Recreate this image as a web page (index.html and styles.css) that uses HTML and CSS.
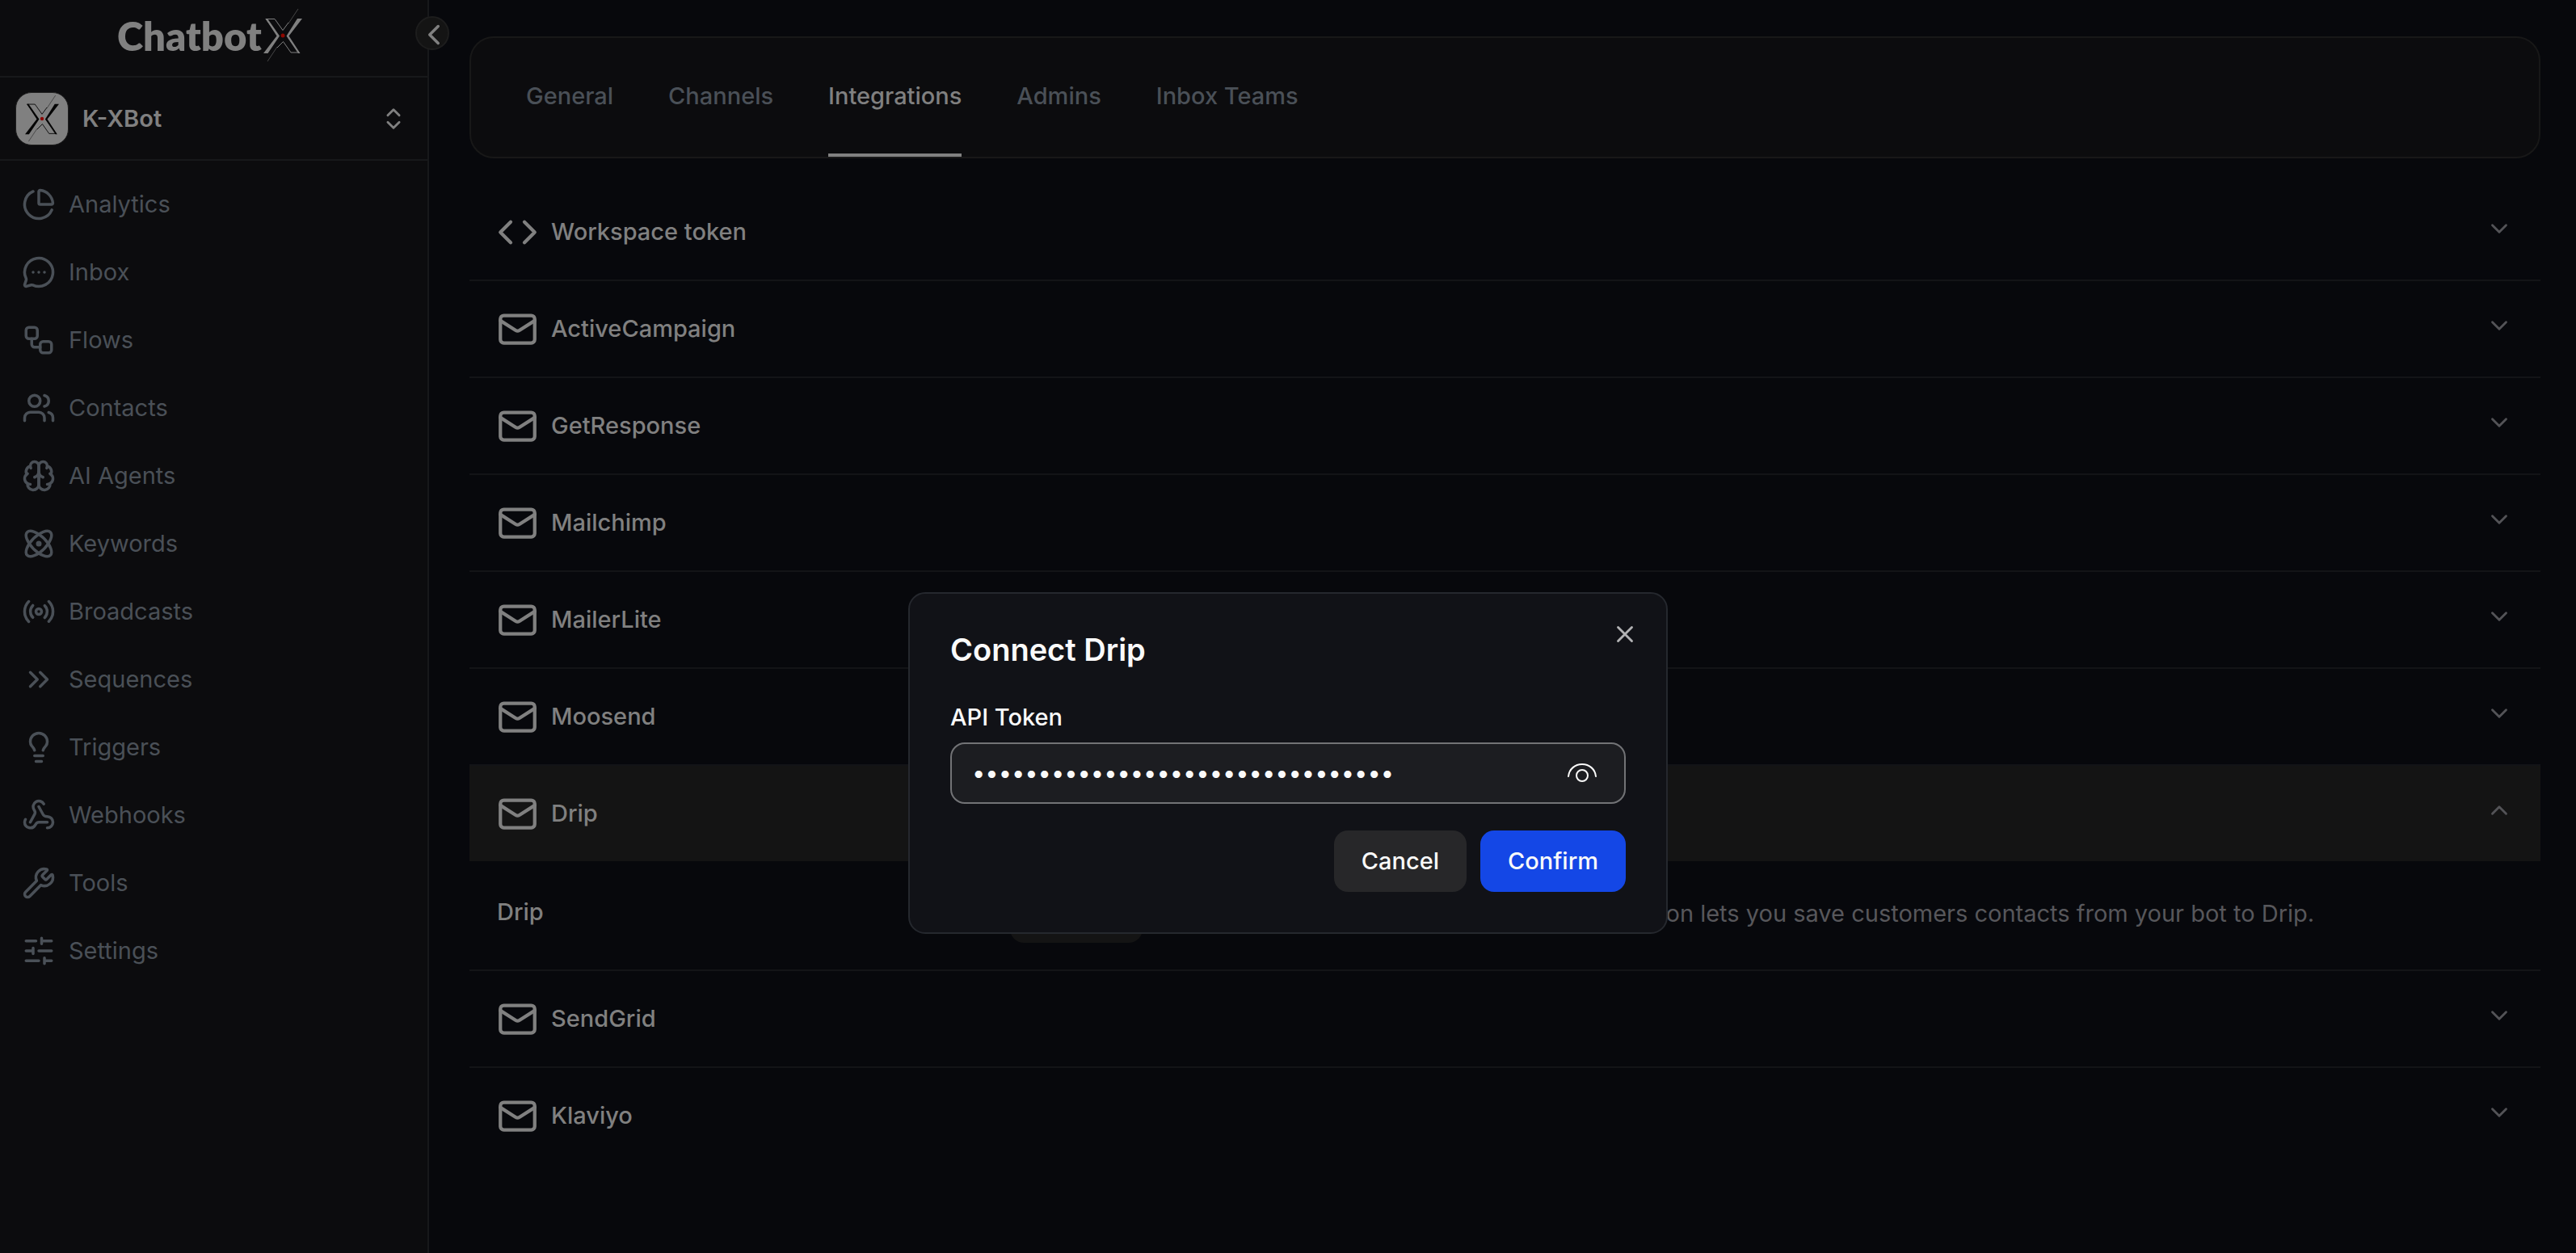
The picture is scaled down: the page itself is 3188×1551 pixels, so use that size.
FILE: index.html
```html
<!DOCTYPE html>
<html lang="en">
<head>
<meta charset="utf-8">
<title>ChatbotX – Integrations</title>
<link rel="stylesheet" href="styles.css">
</head>
<body>
<svg class="sprite" aria-hidden="true">
  <symbol id="i-mail" viewBox="0 0 24 24"><rect width="20" height="16" x="2" y="4" rx="2"/><path d="m22 7-8.97 5.7a1.94 1.94 0 0 1-2.06 0L2 7"/></symbol>
  <symbol id="i-code" viewBox="0 0 24 24"><path d="m16 18 6-6-6-6M8 6l-6 6 6 6"/></symbol>
  <symbol id="i-down" viewBox="0 0 24 24"><path d="m6 9 6 6 6-6"/></symbol>
  <symbol id="i-up" viewBox="0 0 24 24"><path d="m18 15-6-6-6 6"/></symbol>
  <symbol id="i-xmark" viewBox="0 0 48 66">
    <path class="x-hair" d="M43 0 31 18M17 47 5 65"/>
    <path class="x-thin" d="M3 12.500H14L24 26.500 31 17M3 12.500 18 33M17 48 24.500 40.500 34 54H44L29.500 34"/>
    <path class="x-fill" d="M42 12h6L31.500 33.500 45.500 55H43L28.500 33.500ZM0 55h5.500L20 33.500 5 12H2.500L16.500 33.500Z"/>
    <circle class="x-dot" cx="24" cy="33" r="2.500"/>
  </symbol>
</svg>

<div class="app">
  <aside class="sidebar">
    <div class="brand">
      <span class="brand-name">Chatbot</span>
      <svg class="brand-x" aria-hidden="true"><use href="#i-xmark"/></svg>
      <button class="collapse" aria-label="Collapse sidebar"><svg class="icon" viewBox="0 0 24 24"><path d="m15 18-6-6 6-6"/></svg></button>
    </div>
    <button class="workspace">
      <span class="avatar"><svg aria-hidden="true"><use href="#i-xmark"/></svg></span>
      <span class="workspace-name">K-XBot</span>
      <svg class="icon icon-md" viewBox="0 0 24 24"><path d="m7 15 5 5 5-5M7 9l5-5 5 5"/></svg>
    </button>
    <nav class="nav">
      <a href="#"><svg class="icon" viewBox="0 0 24 24"><path d="M21 12c.552 0 1.005-.449.950-.998a10 10 0 0 0-8.953-8.951c-.550-.055-.998.398-.998.950v8a1 1 0 0 0 1 1z"/><path d="M21.210 15.890A10 10 0 1 1 8 2.830"/></svg>Analytics</a>
      <a href="#"><svg class="icon" viewBox="0 0 24 24"><path d="M2.992 16.342a2 2 0 0 1 .094 1.167l-1.065 3.290a1 1 0 0 0 1.236 1.168l3.413-.998a2 2 0 0 1 1.099.092 10 10 0 1 0-4.777-4.719"/><path d="M8 12h.01M12 12h.01M16 12h.01"/></svg>Inbox</a>
      <a href="#"><svg class="icon" viewBox="0 0 24 24"><rect width="8" height="8" x="3" y="3" rx="2"/><path d="M7 11v4a2 2 0 0 0 2 2h4"/><rect width="8" height="8" x="13" y="13" rx="2"/></svg>Flows</a>
      <a href="#"><svg class="icon" viewBox="0 0 24 24"><path d="M16 21v-2a4 4 0 0 0-4-4H6a4 4 0 0 0-4 4v2"/><circle cx="9" cy="7" r="4"/><path d="M22 21v-2a4 4 0 0 0-3-3.870M16 3.130a4 4 0 0 1 0 7.750"/></svg>Contacts</a>
      <a href="#"><svg class="icon" viewBox="0 0 24 24"><path d="M12 5a3 3 0 1 0-5.997.125 4 4 0 0 0-2.526 5.770 4 4 0 0 0 .556 6.588A4 4 0 1 0 12 18Z"/><path d="M12 5a3 3 0 1 1 5.997.125 4 4 0 0 1 2.526 5.770 4 4 0 0 1-.556 6.588A4 4 0 1 1 12 18Z"/><path d="M15 13a4.500 4.500 0 0 1-3-4 4.500 4.500 0 0 1-3 4M17.599 6.500a3 3 0 0 0 .399-1.375M6.003 5.125A3 3 0 0 0 6.401 6.500M3.477 10.896a4 4 0 0 1 .585-.396M19.938 10.500a4 4 0 0 1 .585.396M6 18a4 4 0 0 1-1.967-.516M19.967 17.484A4 4 0 0 1 18 18"/></svg>AI Agents</a>
      <a href="#"><svg class="icon" viewBox="0 0 24 24"><circle cx="12" cy="12" r="1"/><path d="M20.200 20.200c2.040-2.030.020-7.360-4.500-11.900-4.540-4.520-9.870-6.540-11.900-4.500-2.040 2.030-.020 7.360 4.500 11.900 4.540 4.520 9.870 6.540 11.900 4.500Z"/><path d="M15.700 15.700c4.520-4.540 6.540-9.870 4.500-11.900-2.030-2.040-7.360-.020-11.900 4.500-4.520 4.540-6.540 9.870-4.500 11.900 2.030 2.040 7.360.020 11.900-4.500Z"/></svg>Keywords</a>
      <a href="#"><svg class="icon" viewBox="0 0 24 24"><circle cx="12" cy="12" r="2"/><path d="M4.900 19.100C1 15.200 1 8.800 4.900 4.900M7.800 16.200c-2.300-2.300-2.300-6.100 0-8.500M16.200 7.800c2.300 2.300 2.300 6.100 0 8.500M19.100 4.900C23 8.800 23 15.100 19.100 19"/></svg>Broadcasts</a>
      <a href="#"><svg class="icon" viewBox="0 0 24 24"><path d="m6 17 5-5-5-5M13 17l5-5-5-5"/></svg>Sequences</a>
      <a href="#"><svg class="icon" viewBox="0 0 24 24"><path d="M9 14.200c-.300-1.500-1.200-2.200-2-3.200C6.200 10.100 6 9 6 8a6 6 0 0 1 12 0c0 1-.200 2.100-1 3-.800 1-1.700 1.700-2 3.200M9 18h6M10 22h4"/></svg>Triggers</a>
      <a href="#"><svg class="icon" viewBox="0 0 24 24"><path d="M18 16.980h-5.990c-1.100 0-1.950.940-2.480 1.900A4 4 0 0 1 2 17c.010-.700.200-1.400.570-2"/><path d="m6 17 3.130-5.780c.530-.970.100-2.180-.500-3.100a4 4 0 1 1 6.890-4.060"/><path d="m12 6 3.130 5.730C15.660 12.700 16.900 13 18 13a4 4 0 0 1 0 8"/></svg>Webhooks</a>
      <a href="#"><svg class="icon" viewBox="0 0 24 24"><path d="M14.700 6.300a1 1 0 0 0 0 1.400l1.600 1.600a1 1 0 0 0 1.400 0l3.106-3.105c.320-.322.863-.220.983.218a6 6 0 0 1-8.259 7.057l-7.910 7.910a1 1 0 0 1-2.999-3l7.910-7.910a6 6 0 0 1 7.057-8.259c.438.120.540.662.219.984z"/></svg>Tools</a>
      <a href="#"><svg class="icon" viewBox="0 0 24 24"><path d="M21 5h-7M10 5H3M21 12h-9M8 12H3M21 19h-5M12 19H3M14 3v4M8 10v4M16 17v4"/></svg>Settings</a>
    </nav>
  </aside>

  <main class="main">
    <nav class="tabs">
      <a href="#">General</a>
      <a href="#">Channels</a>
      <a href="#" class="active" aria-current="page">Integrations</a>
      <a href="#">Admins</a>
      <a href="#">Inbox Teams</a>
    </nav>

    <div class="accordion">
      <section class="item"><button class="item-head"><svg class="icon icon-lg"><use href="#i-code"/></svg><span>Workspace token</span><svg class="icon chevron"><use href="#i-down"/></svg></button></section>
      <section class="item"><button class="item-head"><svg class="icon icon-lg"><use href="#i-mail"/></svg><span>ActiveCampaign</span><svg class="icon chevron"><use href="#i-down"/></svg></button></section>
      <section class="item"><button class="item-head"><svg class="icon icon-lg"><use href="#i-mail"/></svg><span>GetResponse</span><svg class="icon chevron"><use href="#i-down"/></svg></button></section>
      <section class="item"><button class="item-head"><svg class="icon icon-lg"><use href="#i-mail"/></svg><span>Mailchimp</span><svg class="icon chevron"><use href="#i-down"/></svg></button></section>
      <section class="item"><button class="item-head"><svg class="icon icon-lg"><use href="#i-mail"/></svg><span>MailerLite</span><svg class="icon chevron"><use href="#i-down"/></svg></button></section>
      <section class="item"><button class="item-head"><svg class="icon icon-lg"><use href="#i-mail"/></svg><span>Moosend</span><svg class="icon chevron"><use href="#i-down"/></svg></button></section>
      <section class="item open">
        <button class="item-head" aria-expanded="true"><svg class="icon icon-lg"><use href="#i-mail"/></svg><span>Drip</span><svg class="icon chevron"><use href="#i-up"/></svg></button>
        <div class="panel">
          <h3>Drip</h3>
          <div><button class="btn btn-connect">Connect</button></div>
          <p>Drip integration lets you save customers contacts from your bot to Drip.</p>
        </div>
      </section>
      <section class="item"><button class="item-head"><svg class="icon icon-lg"><use href="#i-mail"/></svg><span>SendGrid</span><svg class="icon chevron"><use href="#i-down"/></svg></button></section>
      <section class="item"><button class="item-head"><svg class="icon icon-lg"><use href="#i-mail"/></svg><span>Klaviyo</span><svg class="icon chevron"><use href="#i-down"/></svg></button></section>
    </div>
  </main>
</div>

<div class="overlay">
  <form class="dialog" role="dialog" aria-labelledby="dialog-title">
    <h2 id="dialog-title">Connect Drip</h2>
    <button type="button" class="close" aria-label="Close"><svg class="icon icon-close" viewBox="0 0 24 24"><path d="M18 6 6 18M6 6l12 12"/></svg></button>
    <label for="token">API Token</label>
    <div class="field">
      <input id="token" type="password" value="a1b2c3d4e5f6a7b8c9d0e1f2a3b4c5d6">
      <button type="button" class="reveal" aria-label="Show token"><svg viewBox="0 0 40 28"><path d="M3 18C4 9 11 3 20 3s16 6 17 15"/><circle cx="20" cy="17" r="7"/></svg></button>
    </div>
    <div class="actions">
      <button type="button" class="btn btn-secondary">Cancel</button>
      <button type="submit" class="btn btn-primary">Confirm</button>
    </div>
  </form>
</div>
</body>
</html>
```

FILE: styles.css
```css
:root {
  --bg: #07080c;
  --surface: #0c0c0e;
  --line: #17181a;
  --text: #808080;
  --muted: #4a5057;
  --raised: #141414;
}

* { box-sizing: border-box; }

body {
  margin: 0;
  background: var(--bg);
  color: var(--text);
  font: 400 29px/42px Inter, sans-serif;
}

button, input { font: inherit; color: inherit; }
button { padding: 0; border: 0; background: none; text-align: left; }
a { color: inherit; text-decoration: none; }
h2, h3, p { margin: 0; }
.sprite { position: absolute; width: 0; height: 0; }

.icon {
  flex: none;
  width: 42px;
  height: 42px;
  fill: none;
  stroke: currentColor;
  stroke-width: 2;
  stroke-linecap: round;
  stroke-linejoin: round;
}
.icon-md { width: 34px; height: 34px; }
.icon-lg { width: 51px; height: 51px; }

.app { display: flex; min-height: 100vh; }

/* Sidebar */
.sidebar {
  flex: none;
  width: 531px;
  background: var(--surface);
  border-right: 2px solid var(--line);
}
.brand {
  position: relative;
  display: flex;
  align-items: center;
  height: 96px;
  padding: 0 0 6px 145px;
  border-bottom: 2px solid var(--line);
}
.brand-name { font: 800 49px/60px Lato, sans-serif; }
.brand-x { width: 48px; height: 66px; margin-left: 2px; }
.x-hair { fill: none; stroke: currentColor; stroke-width: 0.5; }
.x-thin { fill: none; stroke: currentColor; stroke-width: 1; }
.x-fill { fill: currentColor; }
.x-dot { fill: #8c0800; }
.collapse {
  position: absolute;
  top: 20px;
  right: -27px;
  display: grid;
  place-items: center;
  width: 42px;
  height: 42px;
  border: 2px solid #1d1d1d;
  border-radius: 50%;
  background: var(--raised);
}
.workspace {
  display: flex;
  align-items: center;
  gap: 17px;
  width: 100%;
  height: 103px;
  padding: 0 25px 0 19px;
  border-bottom: 2px solid var(--line);
}
.avatar {
  display: grid;
  place-items: center;
  width: 66px;
  height: 66px;
  border: 1px solid #1d1d1d;
  border-radius: 20px;
  background: #808080;
  color: #050505;
}
.avatar svg { width: 42px; height: 58px; }
.workspace-name { flex: 1; font-weight: 600; }
.nav {
  display: grid;
  padding: 12px 10px;
  color: var(--muted);
}
.nav a {
  display: flex;
  align-items: center;
  gap: 16px;
  height: 84px;
  padding-left: 17px;
}

/* Content */
.main {
  flex: 1;
  min-width: 0;
  padding: 45px 44px 45px 50px;
  font-weight: 500;
}
.tabs {
  display: flex;
  gap: 68px;
  padding: 0 68px;
  border: 2px solid #181818;
  border-radius: 30px;
  background: var(--surface);
  color: var(--muted);
}
.tabs a {
  padding: 51px 0 50px;
  border-bottom: 4px solid transparent;
}
.tabs .active { color: var(--text); border-color: var(--text); }

.accordion { margin-top: 32px; }
.item { border-bottom: 2px solid #131417; }
.item:last-child { border-bottom: 0; }
.item-head {
  display: flex;
  align-items: center;
  gap: 16px;
  width: 100%;
  height: 118px;
  padding: 0 34px;
}
.item-head span { flex: 1; }
.chevron { width: 34px; height: 34px; margin-bottom: 8px; color: #535357; }
.open .item-head { background: var(--raised); }
.panel {
  display: grid;
  grid-template-columns: repeat(4, 1fr);
  gap: 44px;
  align-items: center;
  min-height: 134px;
  padding: 24px 34px 32px;
}
.panel h3 { font-size: 29px; font-weight: 500; }
.panel p { grid-column: span 2; padding-top: 4px; font-weight: 400; color: #57575b; }

.btn {
  height: 76px;
  padding: 0 34px;
  border-radius: 17px;
  font-weight: 500;
  text-align: center;
}
.btn-connect { width: 164px; padding: 0; background: var(--raised); }
.btn-secondary { background: #272729; }
.btn-primary { background: #1447e6; }

/* Dialog */
.overlay {
  position: fixed;
  inset: 0;
  display: flex;
  justify-content: center;
  align-items: flex-start;
  padding-top: 733px;
}
.dialog {
  position: relative;
  display: flex;
  flex-direction: column;
  width: 940px;
  padding: 50px;
  border: 2px solid #25282e;
  border-radius: 21px;
  background: #111217;
  color: #fafafa;
}
.dialog h2 { font-size: 38px; font-weight: 600; line-height: 38px; }
.dialog label { margin: 50px 0 17px; font-weight: 500; line-height: 29px; }
.close {
  position: absolute;
  top: 33px;
  right: 34px;
  height: 34px;
  color: #b3b3b5;
}
.icon-close { display: block; width: 34px; height: 34px; }
.field {
  display: flex;
  align-items: center;
  height: 76px;
  padding: 0 32px 0 25px;
  border: 2px solid #727376;
  border-radius: 18px;
  background: #1c1d21;
}
.field input {
  flex: 1;
  min-width: 0;
  padding: 0;
  border: 0;
  outline: 0;
  background: none;
}
.reveal svg {
  display: block;
  width: 40px;
  height: 28px;
  fill: none;
  stroke: #fafafa;
  stroke-width: 2;
  stroke-linecap: round;
}
.actions { display: flex; justify-content: flex-end; gap: 17px; margin-top: 33px; }
```
